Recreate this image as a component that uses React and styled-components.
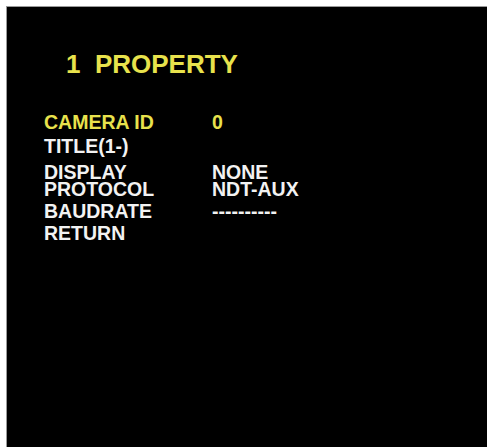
import React from 'react';
import styled, { createGlobalStyle } from 'styled-components';

const GlobalStyle = createGlobalStyle`
  html, body {
    margin: 0;
    padding: 0;
    background: #ffffff;
  }
  body {
    padding: 6px 0 0 6px;
    font-family: "Liberation Sans", Arial, sans-serif;
  }
`;

const Screen = styled.div`
  box-sizing: border-box;
  width: 481px;
  height: 441px;
  background: #000000;
  border-left: 1px solid #9a9a9a;
  border-top: 1px solid #9a9a9a;
  padding: 44px 0 0 59px;
  font-weight: bold;
`;

const Title = styled.div`
  font-size: 26px;
  line-height: 26px;
  color: #e8e24c;
  white-space: pre;
`;

const Menu = styled.div`
  margin: 37px 0 0 -22px;
  display: flex;
  flex-direction: column;
`;

const Row = styled.div`
  display: grid;
  grid-template-columns: 168px auto;
  height: ${p => p.$pitch}px;
  font-size: 19.5px;
  line-height: 16px;
  color: ${p => (p.$active ? '#e8e24c' : '#f2f2f2')};
  white-space: pre;
`;

const items = [
  { label: 'CAMERA ID', value: '0', pitch: 24, active: true },
  { label: 'TITLE(1-)', value: '', pitch: 26 },
  { label: 'DISPLAY', value: 'NONE', pitch: 17 },
  { label: 'PROTOCOL', value: 'NDT-AUX', pitch: 22 },
  { label: 'BAUDRATE', value: '----------', pitch: 22 },
  { label: 'RETURN', value: '', pitch: 20 },
];

export default function App() {
  return (
    <>
      <GlobalStyle />
      <Screen>
        <Title>{'1  PROPERTY'}</Title>
        <Menu>
          {items.map(item => (
            <Row key={item.label} $pitch={item.pitch} $active={item.active}>
              <span>{item.label}</span>
              <span>{item.value}</span>
            </Row>
          ))}
        </Menu>
      </Screen>
    </>
  );
}
